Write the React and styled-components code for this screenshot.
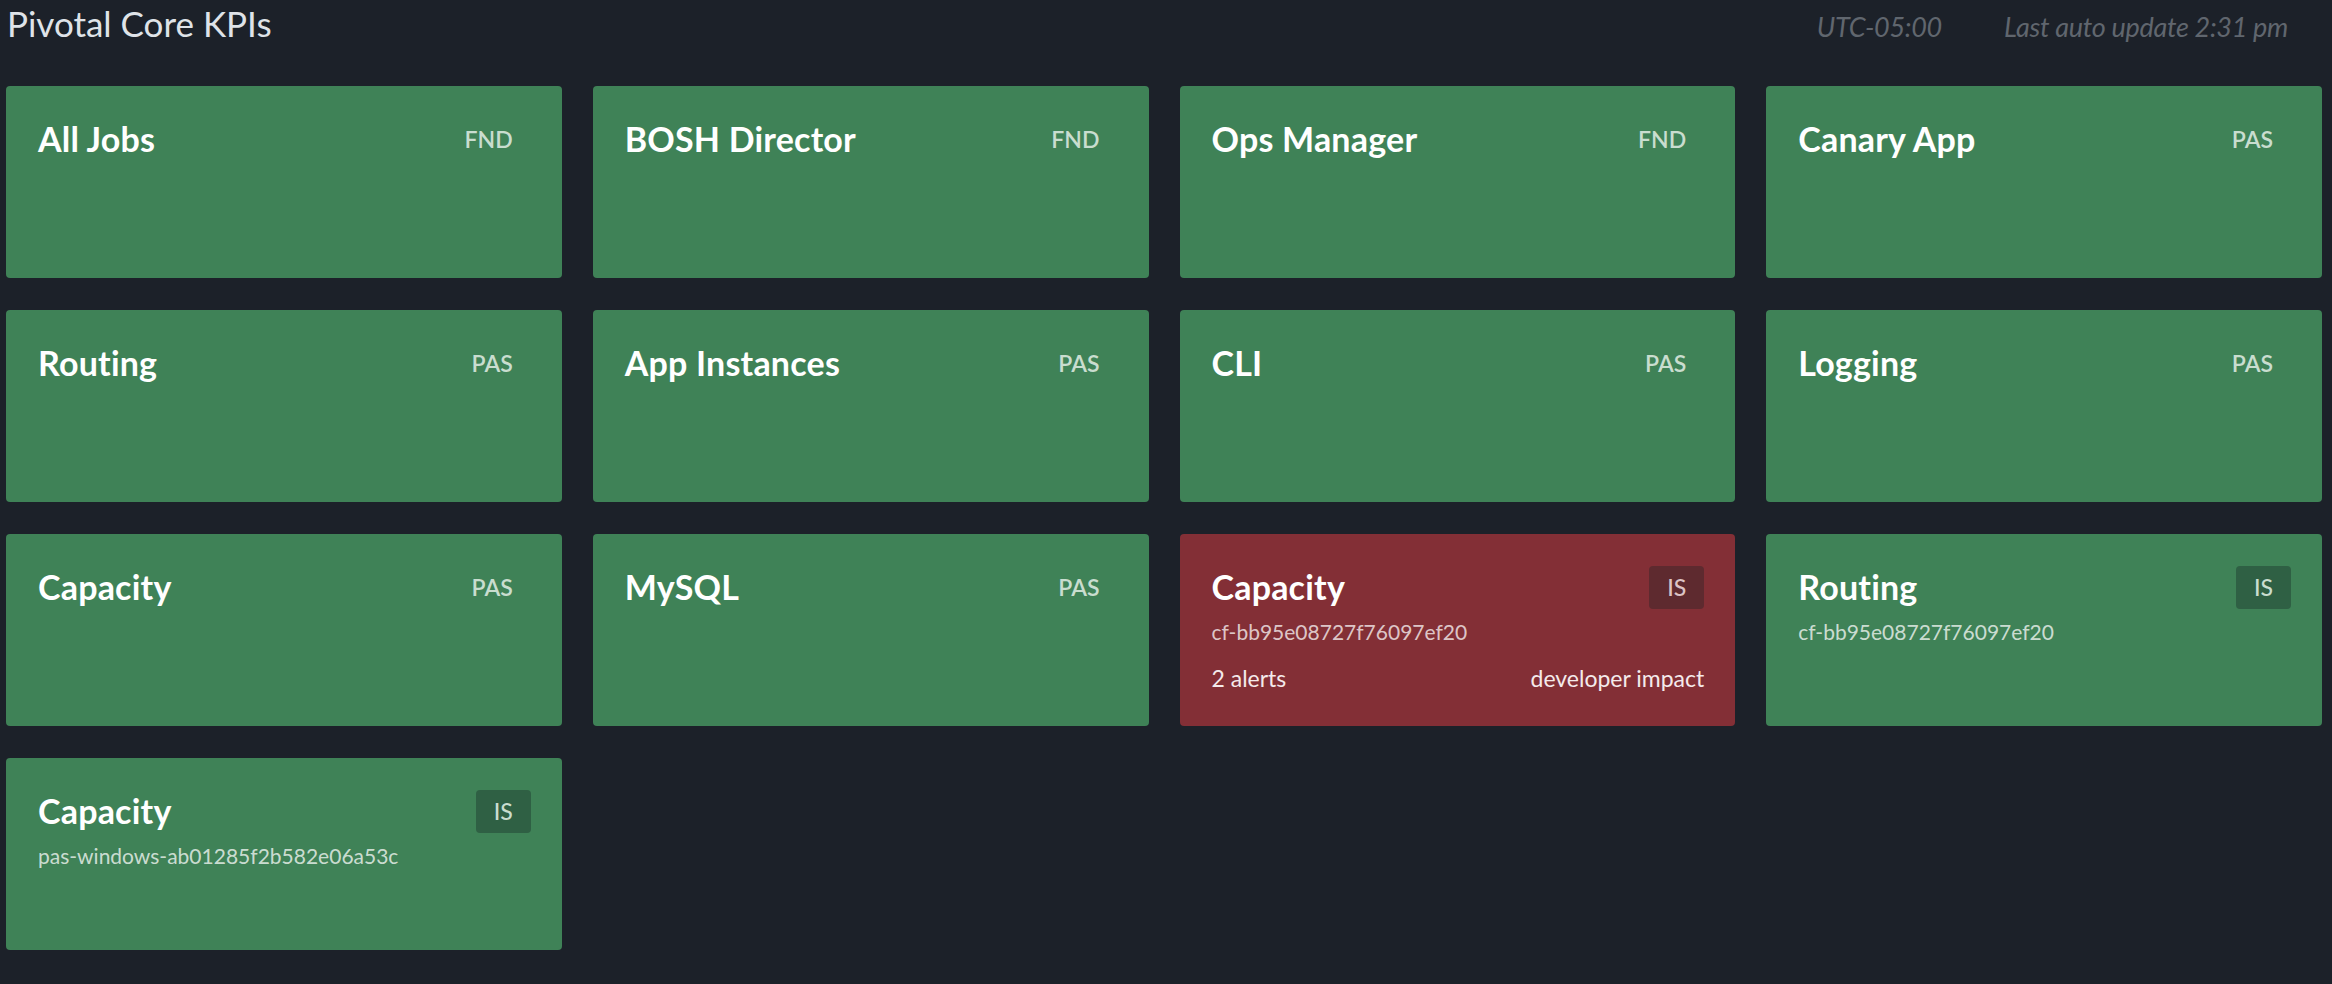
import React from 'react';
import styled, { createGlobalStyle } from 'styled-components';

const GlobalStyle = createGlobalStyle`
  body {
    margin: 0;
    background: #1c2129;
    font-family: Lato, "Open Sans", sans-serif;
  }
`;

const tiles = [
  { title: 'All Jobs', tag: 'FND' },
  { title: 'BOSH Director', tag: 'FND' },
  { title: 'Ops Manager', tag: 'FND' },
  { title: 'Canary App', tag: 'PAS' },
  { title: 'Routing', tag: 'PAS' },
  { title: 'App Instances', tag: 'PAS' },
  { title: 'CLI', tag: 'PAS' },
  { title: 'Logging', tag: 'PAS' },
  { title: 'Capacity', tag: 'PAS' },
  { title: 'MySQL', tag: 'PAS' },
  {
    title: 'Capacity',
    tag: 'IS',
    boxed: true,
    status: 'alert',
    sub: 'cf-bb95e08727f76097ef20',
    alerts: '2 alerts',
    impact: 'developer impact',
  },
  { title: 'Routing', tag: 'IS', boxed: true, sub: 'cf-bb95e08727f76097ef20' },
  { title: 'Capacity', tag: 'IS', boxed: true, sub: 'pas-windows-ab01285f2b582e06a53c' },
];

export default function App()
{
  return (
    <Page>
      <GlobalStyle />
      <Header>
        <Title>Pivotal Core KPIs</Title>
        <Meta>
          <span>UTC-05:00</span>
          <span>Last auto update 2:31 pm</span>
        </Meta>
      </Header>
      <Grid>
        {tiles.map((t, i) => (
          <Card key={i} $alert={t.status === 'alert'}>
            <CardTop>
              <CardTitle>{t.title}</CardTitle>
              <Tag $boxed={t.boxed} $alert={t.status === 'alert'}>{t.tag}</Tag>
            </CardTop>
            {t.sub && <Sub>{t.sub}</Sub>}
            {t.alerts && (
              <Footer>
                <span>{t.alerts}</span>
                <span>{t.impact}</span>
              </Footer>
            )}
          </Card>
        ))}
      </Grid>
    </Page>
  );
}

const Page = styled.div`
  min-height: 984px;
  box-sizing: border-box;
`;

const Header = styled.header`
  display: flex;
  justify-content: space-between;
  align-items: baseline;
  height: 86px;
  padding: 0 44px 0 7px;
  box-sizing: border-box;
`;

const Title = styled.h1`
  margin: 0;
  font-size: 35px;
  font-weight: 400;
  color: #dfe3e8;
  line-height: 46px;
`;

const Meta = styled.div`
  display: flex;
  gap: 62px;
  font-size: 27px;
  font-style: italic;
  color: #60666e;
  letter-spacing: -0.3px;
`;

const Grid = styled.main`
  display: grid;
  grid-template-columns: repeat(4, 1fr);
  grid-auto-rows: 192px;
  column-gap: 31px;
  row-gap: 32px;
  padding: 0 10px 0 6px;
`;

const Card = styled.section`
  display: flex;
  flex-direction: column;
  background: ${p => (p.$alert ? '#832f36' : '#3f8257')};
  border-radius: 4px;
  padding: 32px 31px 34px 32px;
  box-sizing: border-box;
  color: #fff;
`;

const CardTop = styled.div`
  display: flex;
  justify-content: space-between;
  align-items: flex-start;
`;

const CardTitle = styled.h2`
  margin: 0;
  font-size: 34px;
  font-weight: 700;
  line-height: 42px;
  letter-spacing: 0.2px;
`;

const Tag = styled.span`
  font-size: 23px;
  font-weight: ${p => (p.$boxed ? 500 : 600)};
  line-height: 27px;
  padding: 8px 18px;
  border-radius: 4px;
  color: ${p => (p.$alert ? '#dcc3c5' : '#c9ddcf')};
  background: ${p => (!p.$boxed ? 'transparent' : p.$alert ? '#5e2a2f' : '#2f6044')};
`;

const Sub = styled.div`
  margin-top: 10px;
  font-size: 21px;
  font-weight: 400;
  color: rgba(255, 255, 255, 0.74);
`;

const Footer = styled.div`
  margin-top: auto;
  display: flex;
  justify-content: space-between;
  font-size: 23px;
  color: #f4eaeb;
`;
